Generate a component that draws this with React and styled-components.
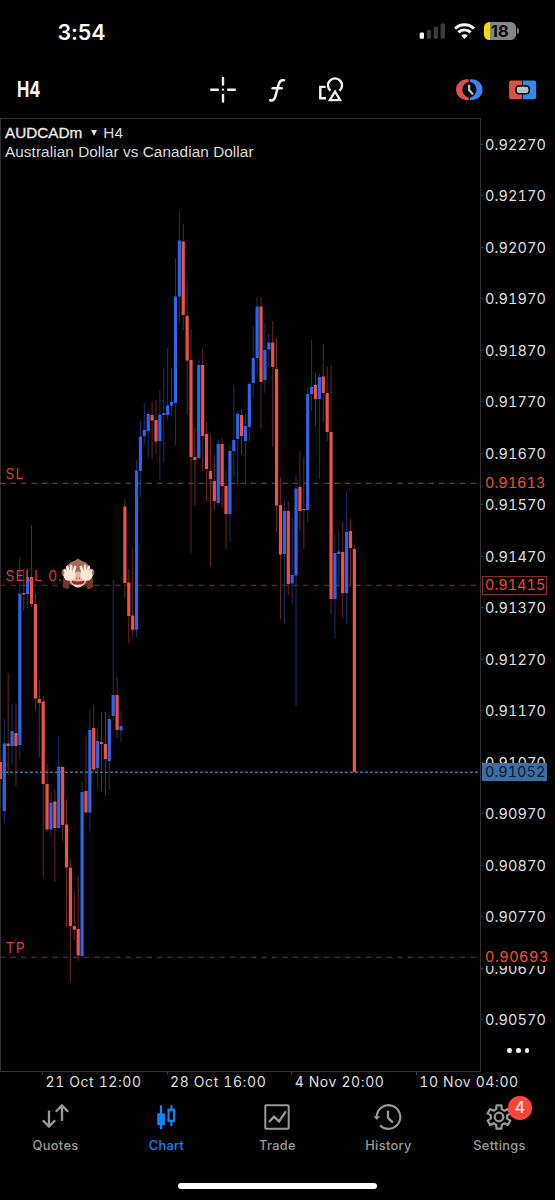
import React from 'react';
import styled, { createGlobalStyle } from 'styled-components';

const RED = '#ee5147';
const BLUE = '#2f64ea';

/**
 *  Data
 */
const STEP = 3.89;

// [direction, high, body top, body bottom, low]
const candles = [
  ['r', 757, 762, 779, 779], ['b', 719, 743.5, 811, 823], ['r', 673, 743.5, 746, 775],
  ['b', 704, 731, 746, 765], ['r', 703, 733, 746, 787], ['b', 557, 593.5, 745, 759],
  ['r', 569, 593, 594.5, 611], ['b', 568, 577, 594, 608], ['r', 525, 577, 604, 607],
  ['r', 594, 604, 698.5, 710], ['r', 680, 699, 703, 757], ['r', 696, 701.5, 784, 877],
  ['r', 764, 784, 829.5, 832], ['b', 792, 802.7, 829.5, 837], ['r', 789, 801.5, 828, 882],
  ['b', 736, 766.7, 828, 829], ['r', 766, 767, 825, 841], ['r', 799, 824.5, 867.5, 927],
  ['r', 859, 867.7, 926, 982], ['r', 892, 926, 929.7, 940], ['r', 876, 929, 955.5, 961],
  ['b', 782, 792, 956, 957], ['r', 736, 791, 812.5, 814], ['b', 709, 730, 812.5, 831],
  ['r', 705, 728, 769.5, 772], ['b', 728, 741, 768, 789], ['r', 712, 742, 744, 792],
  ['r', 712, 744, 759, 796], ['b', 715, 719, 761, 790], ['b', 580, 695, 716, 720],
  ['r', 677, 695, 730, 738], ['b', 711, 726, 730.5, 742], ['r', 499, 506.5, 583, 598],
  ['r', 569, 582.5, 616, 643], ['r', 548, 615.5, 629.7, 636], ['b', 460, 470.5, 629.7, 637],
  ['b', 421, 436.5, 471, 497], ['b', 403, 430, 436, 445], ['b', 412, 414, 431, 457],
  ['r', 402, 415, 420.5, 459], ['r', 400, 420, 441.5, 454], ['b', 390, 414.5, 441, 480],
  ['b', 368, 413, 415, 462], ['b', 348, 405.5, 415, 420], ['b', 368, 402, 405.5, 417],
  ['b', 258, 296.5, 403, 445], ['b', 212, 240.5, 296.5, 324], ['r', 224, 241.5, 315, 330],
  ['r', 281, 316, 360.5, 415], ['r', 329, 360, 457, 553], ['r', 427, 457, 460, 506],
  ['b', 360, 365, 458, 459], ['r', 349, 365, 436, 471], ['r', 422, 434, 469, 501],
  ['r', 435, 471, 479, 566], ['r', 455, 481, 501, 510], ['b', 440, 444, 503, 506],
  ['r', 438, 444, 486, 508], ['r', 471, 486, 514, 549], ['b', 445, 451, 514, 542],
  ['b', 385, 440, 451, 476], ['b', 411, 414, 439, 486], ['r', 409, 415, 436, 454],
  ['b', 414, 426, 441, 485], ['b', 382, 384, 427, 442], ['b', 326, 358, 383, 398],
  ['b', 297, 306.5, 358, 375], ['r', 297, 306.5, 382, 428], ['b', 323, 350, 380, 393],
  ['b', 334, 342.5, 349.5, 368], ['r', 321, 342.5, 367, 447], ['r', 338, 369, 505.5, 532],
  ['r', 477, 505, 554.5, 619], ['b', 501, 511, 554, 624], ['r', 502, 511, 584, 595],
  ['b', 518, 575, 583.5, 604], ['b', 475, 488.5, 575.5, 706], ['r', 451, 487, 511, 531],
  ['r', 457, 509, 510.2, 549], ['b', 387, 394, 510, 523], ['b', 340, 387, 394, 411],
  ['r', 373, 385, 399, 426], ['b', 374, 377, 399, 479], ['r', 344, 376.5, 393, 422],
  ['r', 366, 393, 432, 441], ['r', 365, 432, 599, 614], ['b', 535, 553, 599, 639],
  ['b', 532, 551.5, 554, 588], ['r', 522, 552, 593, 618], ['b', 492, 532, 593, 623],
  ['r', 519, 531, 548, 587], ['r', 545, 549, 772, 772],
];

const prices = [
  '0.92270', '0.92170', '0.92070', '0.91970', '0.91870', '0.91770',
  '0.91670', '0.91570', '0.91470', '0.91370', '0.91270', '0.91170',
  '0.91070', '0.90970', '0.90870', '0.90770', '0.90670', '0.90570',
];

const times = ['21 Oct 12:00', '28 Oct 16:00', '4 Nov 20:00', '10 Nov 04:00'];

/**
 *  Styled Components
 */
const GlobalStyle = createGlobalStyle`
  body {
    margin: 0;
    background: #000;
  }
`;

const Screen = styled.div`
  display: flex;
  flex-direction: column;
  width: 555px;
  height: 1200px;
  overflow: hidden;
  background: #000;
  color: #fff;
  font-family: Inter, "Liberation Sans", sans-serif;
`;

const StatusBar = styled.header`
  display: flex;
  align-items: center;
  justify-content: space-between;
  box-sizing: border-box;
  height: 62px;
  padding: 0 36px 0 57.5px;
`;

const Clock = styled.span`
  font-size: 21.5px;
  font-weight: 600;
  line-height: 62px;
  letter-spacing: -0.1px;
  padding-top: 1px;
`;

const StatusIcons = styled.div`
  display: flex;
  align-items: center;
  gap: 9px;
`;

const Battery = styled.div`
  display: flex;
  align-items: center;
  justify-content: center;
  width: 32.5px;
  height: 18px;
  border-radius: 5.5px;
  background: linear-gradient(90deg, #ffd60a 18%, #858585 18%);
  color: #0a0a0a;
  font-size: 16.5px;
  font-weight: 700;
  line-height: 18px;
`;

const BatteryTip = styled.i`
  width: 1.6px;
  height: 6px;
  margin-left: -7.6px;
  border-radius: 0 2px 2px 0;
  background: #777;
`;

const Toolbar = styled.nav`
  display: grid;
  grid-template-columns: 196px 54px 54px 54px 1fr 54px 53px 6px;
  align-items: center;
  justify-items: center;
  box-sizing: border-box;
  height: 56px;
  padding-bottom: 1px;
`;

const Timeframe = styled.button`
  justify-self: start;
  margin: 0 0 0 17px;
  padding: 0 0 1px;
  border: 0;
  background: none;
  color: #f4f4f4;
  font: 700 22px Inter, sans-serif;
  line-height: 54px;
  transform: scaleX(0.75);
  transform-origin: left;
`;

const ChartRow = styled.main`
  display: flex;
  height: 954px;
`;

const Plot = styled.section`
  position: relative;
  box-sizing: border-box;
  width: 481px;
  border: 1.5px solid #303030;
  border-left-width: 1px;
  font-family: "Liberation Sans", Arial, sans-serif;
`;

const Candles = styled.svg`
  position: absolute;
  left: -1px;
  top: -1px;
`;

const Heading = styled.div`
  position: relative;
  padding: 3.5px 0 0 4px;
  color: #dcdcdc;
  font-size: 15.3px;
  line-height: 19px;
`;

const Symbol = styled.strong`
  font-weight: 400;
  color: #eee;
  -webkit-text-stroke: 0.3px #eee;
`;

const Arrow = styled.i`
  display: inline-block;
  margin: 0 6.5px 2px 8.5px;
  border: 3px solid transparent;
  border-top: 6px solid #ddd;
  border-bottom: 0;
`;

const Description = styled.div`
  font-size: 15.3px;
  letter-spacing: 0.08px;
`;

const LevelLabel = styled.span`
  position: absolute;
  left: 4.5px;
  top: ${props => props.$y - 119 - 9}px;
  color: ${props => props.$color};
  font: 14px/18px Inter, sans-serif;
  letter-spacing: 1.1px;
`;

const PriceAxis = styled.aside`
  position: relative;
  width: 74px;
`;

const PriceList = styled.ol`
  margin: 0;
  padding: 0.7px 0 0;
  list-style: none;
`;

const Price = styled.li`
  display: flex;
  align-items: center;
  height: 51.5px;
  color: #dedede;
  font-size: 14.5px;
  font-variant-numeric: tabular-nums;
  letter-spacing: 0.08px;

  &:before {
    content: "";
    width: 2px;
    height: 1px;
    margin-right: 2px;
    background: #3a3a3a;
  }
`;

const PriceTag = styled.span`
  position: absolute;
  left: 1px;
  top: ${props => props.$y - 118 - 9.3}px;
  box-sizing: border-box;
  width: ${props => props.$width || 65.3}px;
  height: 18.6px;
  padding-left: 2px;
  border: 1px solid ${props => props.$border || 'transparent'};
  background: ${props => props.$fill || '#000'};
  color: ${props => props.$color};
  font-size: 14.5px;
  font-variant-numeric: tabular-nums;
  line-height: 16.6px;
  letter-spacing: ${props => props.$spacing || 0}px;
`;

const More = styled.button`
  display: flex;
  gap: 4.4px;
  margin: 2.5px 0 0 26.4px;
  padding: 0;
  border: 0;
  background: none;

  i {
    width: 4.4px;
    height: 4.4px;
    border-radius: 50%;
    background: #f5f5f5;
  }
`;

const TimeAxis = styled.div`
  display: grid;
  grid-template-columns: repeat(4, 124.6px);
  height: 23px;
  padding-left: 42px;
`;

const Time = styled.time`
  padding-left: 3.5px;
  color: #dedede;
  font-size: 14px;
  font-variant-numeric: tabular-nums;
  line-height: 19.5px;
  letter-spacing: 0.6px;
  white-space: nowrap;
  background: linear-gradient(#3a3a3a, #3a3a3a) 0 0 / 1px 3px no-repeat;
`;

const TabBar = styled.nav`
  display: grid;
  grid-template-columns: repeat(5, 1fr);
  height: 88px;
`;

const Tab = styled.a`
  position: relative;
  display: flex;
  flex-direction: column;
  align-items: center;
  padding-top: 7px;
  color: ${props => (props.$active ? '#0a84ff' : '#999')};
  font-size: 12.8px;
  font-weight: 500;
  line-height: 18px;
  letter-spacing: 0.35px;

  svg {
    margin: 0 1.6px 5px 0;
  }
`;

const Badge = styled.b`
  position: absolute;
  left: 64.2px;
  top: 1.4px;
  width: 23.4px;
  height: 23.4px;
  border-radius: 50%;
  background: #ff453a;
  color: #fff;
  font-size: 16px;
  font-weight: 400;
  line-height: 23.4px;
  letter-spacing: 0;
  text-align: center;
`;

const HomeIndicator = styled.div`
  width: 198.5px;
  height: 6px;
  margin: 0 auto;
  border-radius: 3px;
  background: #fff;
`;

/**
 *  Status bar icons
 */
const Signal = () => (
  <svg width="26" height="16" viewBox="0 0 26 16" fill="#3b3b3b">
    <rect x="0.7" y="9.5" width="4.3" height="6.3" rx="1.2" fill="#fff" />
    <rect x="7.8" y="7" width="4.3" height="8.8" rx="1.2" />
    <rect x="14.7" y="3.7" width="4.3" height="12.1" rx="1.2" />
    <rect x="21.6" y="0.4" width="4.3" height="15.4" rx="1.2" />
  </svg>
);

const Wifi = () => (
  <svg width="21" height="16" viewBox="0 0 21 16" fill="none" stroke="#fff" strokeWidth="2.9">
    <path d="M1 5.6A13.6 13.6 0 0 1 20 5.6" />
    <path d="M4.4 9.4A8.7 8.7 0 0 1 16.6 9.4" />
    <path d="M10.5 16L7.2 12.6A4.7 4.7 0 0 1 13.8 12.6Z" fill="#fff" stroke="none" />
  </svg>
);

/**
 *  Toolbar icons
 */
const Crosshair = () => (
  <svg width="28" height="28" viewBox="0 0 28 28" stroke="#f2f2f2" strokeWidth="2.4" strokeLinecap="round">
    <path d="M2.2 13.7H8.8M19.2 13.7H25.8M14 1.9V8.5M14 18.9V25.5" />
    <circle cx="14" cy="13.7" r="1.1" fill="#f2f2f2" stroke="none" />
  </svg>
);

const FunctionIcon = () => (
  <svg width="28" height="28" viewBox="0 0 28 28" fill="none" stroke="#f2f2f2" strokeWidth="2.5" strokeLinecap="round">
    <path d="M7.2 24.2C10 25 11.4 23.6 12.2 20.9L15.6 8.6C16.5 5.2 18 3.6 21 4.3" />
    <path d="M9.6 12.3H18.6" />
  </svg>
);

const Shapes = () => (
  <svg width="28" height="28" viewBox="0 0 28 28" fill="none" stroke="#f2f2f2" strokeWidth="2.4">
    <path d="M8.6 10.9H3.3V22.2H9" />
    <path d="M13.6 14.8A7 7 0 1 1 22.4 14.8" />
    <path d="M18 15.5L12.9 24.1H23.1Z" />
  </svg>
);

const Sessions = () => (
  <svg width="28" height="24" viewBox="0 0 28 24">
    <path d="M13.8 1.2H11.5A10.5 10.5 0 0 0 11.5 22.2H13.8V19.7A8.2 8.2 0 0 1 13.8 3.7Z" fill="#dc5148" />
    <path d="M15 1.2H17.1A10.5 10.5 0 0 1 17.1 22.2H15V19.7A8.2 8.2 0 0 0 15 3.7Z" fill="#3587ed" />
    <path d="M14.1 6.7V12.1L18 16.4" fill="none" stroke="#b4c4ca" strokeWidth="2.3" />
  </svg>
);

const OneClick = () => (
  <svg width="28" height="20" viewBox="0 0 28 20">
    <path d="M2.1 0.4H13V19.2H2.1A2 2 0 0 1 0.1 17.2V2.4A2 2 0 0 1 2.1 0.4Z" fill="#dc5148" />
    <path d="M14 0.4H25.1A2 2 0 0 1 27.1 2.4V17.2A2 2 0 0 1 25.1 19.2H14Z" fill="#3587ed" />
    <rect x="7" y="5.9" width="13.2" height="7.8" rx="3" fill="#b4c4ca" stroke="#000" strokeWidth="1.5" />
  </svg>
);

/**
 *  Tab icons
 */
const QuotesIcon = () => (
  <svg width="30" height="30" viewBox="0 0 30 30" fill="none" stroke="currentColor" strokeWidth="2.3">
    <path d="M9 8.5V24.5M2.8 18.3L9 24.5L15.2 18.3" />
    <path d="M22 19V3.5M15.8 9.7L22 3.5L28.2 9.7" />
  </svg>
);

const ChartIcon = () => (
  <svg width="30" height="30" viewBox="0 0 30 30" fill="none" stroke="currentColor" strokeWidth="2.2">
    <path d="M10 3.3V27" />
    <rect x="6.2" y="11.3" width="7.7" height="11.7" fill="currentColor" stroke="none" />
    <path d="M20.4 3.3V7.5M20.4 19.5V24" />
    <rect x="17.6" y="7.8" width="5.6" height="11" />
  </svg>
);

const TradeIcon = () => (
  <svg width="30" height="30" viewBox="0 0 30 30" fill="none" stroke="currentColor" strokeWidth="2">
    <rect x="3.3" y="3.3" width="23.4" height="23.4" rx="0.8" />
    <path d="M7 20L12 14.6L17 19.4L23.8 9.3" strokeWidth="2.3" />
  </svg>
);

const HistoryIcon = () => (
  <svg width="30" height="30" viewBox="0 0 30 30" fill="none" stroke="currentColor" strokeWidth="2.1">
    <path d="M3.7 15A11.8 11.8 0 1 1 7 23.2" />
    <path d="M0.6 14.2H7.2L3.8 18Z" fill="currentColor" stroke="none" />
    <path d="M15 8.8V15.9L20 20.6" strokeWidth="2.3" />
  </svg>
);

const gearPath = () => {
  const points = [];
  for (let i = 0; i < 6; i++) {
    [[-19, 8.3], [-12, 11.9], [12, 11.9], [19, 8.3]].forEach(([offset, r]) => {
      const a = ((i * 60 + offset - 90) * Math.PI) / 180;
      points.push(`${(15 + r * Math.cos(a)).toFixed(2)} ${(15 + r * Math.sin(a)).toFixed(2)}`);
    });
  }
  return `M${points.join('L')}Z`;
};

const SettingsIcon = () => (
  <svg width="30" height="30" viewBox="0 0 30 30" fill="none" stroke="currentColor" strokeWidth="2.2" strokeLinejoin="round">
    <path d={gearPath()} />
    <circle cx="15" cy="15" r="4.3" />
  </svg>
);

const Monkey = () => (
  <g>
    <circle cx="65.6" cy="572.5" r="3.9" fill="#a9665a" />
    <circle cx="90.4" cy="572.5" r="3.9" fill="#a9665a" />
    <path d="M65 574Q65 563 74 561L78 558.6L82 561Q91 563 91 574Q91 586 78 586Q65 586 65 574Z" fill="#a9675a" />
    <ellipse cx="78" cy="579" rx="8.5" ry="7.6" fill="#e3b5a0" />
    <path d="M71.5 580.4Q78 582.5 84.5 580.4Q83.5 586 78 586Q72.5 586 71.5 580.4Z" fill="#a81f24" />
    <path d="M72 583.6Q78 586 84 583.6Q82 587.6 78 587.6Q74 587.6 72 583.6Z" fill="#f0dad0" />
    <path d="M63.2 578L70 580L69 588.5Q65.5 589.5 62.8 587Z" fill="#723728" />
    <path d="M86.2 580L93 578L93.4 587Q90 589.8 87 588.8Z" fill="#723728" />
    {/* fingers are drawn as strokes that fan out from each palm */}
    <g stroke="#f6e6d6" strokeWidth="2.7" strokeLinecap="round">
      <path d="M68 575L64.8 570.6M69 574L67.2 567M71 573L71 565.8M73 574L75 567" />
      <path d="M88 575L91.2 570.6M87 574L88.8 567M85 573L85 565.8M83 574L81 567" />
    </g>
    <g fill="#f6e6d6">
      <ellipse cx="69.6" cy="575.6" rx="6.2" ry="5.2" />
      <ellipse cx="86.4" cy="575.6" rx="6.2" ry="5.2" />
    </g>
    <path d="M76.3 578.2H77.2M79 578.2H79.9" stroke="#6b3026" strokeWidth="1.2" />
  </g>
);

const PriceChart = () => (
  <Candles width="480" height="952" viewBox="0 118 480 952">
    <g stroke="#8a2a24" strokeWidth="1.1" strokeDasharray="5.6 4.85">
      <path d="M0 483.4H480" />
      <path d="M0 585.3H480" />
      <path d="M0 957.2H480" />
    </g>
    {candles.map(([dir, high, top, bottom, low], i) => {
      const x = 0.4 + i * STEP;
      const up = dir === 'b';
      return (
        <g key={i}>
          <path d={`M${x} ${high}V${low}`} stroke={up ? '#17346e' : '#6e2620'} strokeWidth="1" />
          <rect x={x - 1.6} y={top} width="3.2" height={bottom - top} fill={up ? BLUE : RED} />
        </g>
      );
    })}
    <path d="M0 772.2H480" stroke="#4379a3" strokeWidth="1.4" strokeDasharray="2.8 2.2" />
  </Candles>
);

const MonkeyLayer = () => (
  <Candles width="480" height="952" viewBox="0 118 480 952">
    <Monkey />
  </Candles>
);

const tabs = [
  { name: 'Quotes', Icon: QuotesIcon },
  { name: 'Chart', Icon: ChartIcon, active: true },
  { name: 'Trade', Icon: TradeIcon },
  { name: 'History', Icon: HistoryIcon },
  { name: 'Settings', Icon: SettingsIcon, badge: 4 },
];

const App = () => (
  <Screen>
    <GlobalStyle />
    <StatusBar>
      <Clock>3:54</Clock>
      <StatusIcons>
        <Signal />
        <Wifi />
        <Battery>18</Battery>
        <BatteryTip />
      </StatusIcons>
    </StatusBar>
    <Toolbar>
      <Timeframe>H4</Timeframe>
      <Crosshair />
      <FunctionIcon />
      <Shapes />
      <span />
      <Sessions />
      <OneClick />
    </Toolbar>
    <ChartRow>
      <Plot>
        <PriceChart />
        <Heading>
          <Symbol>AUDCADm</Symbol>
          <Arrow />
          H4
          <Description>Australian Dollar vs Canadian Dollar</Description>
        </Heading>
        <LevelLabel $y={474} $color="#cf4526">SL</LevelLabel>
        <LevelLabel $y={576} $color="#cf3c38">SELL 0.</LevelLabel>
        <LevelLabel $y={947.5} $color="#cf4526">TP</LevelLabel>
        <MonkeyLayer />
      </Plot>
      <PriceAxis>
        <PriceList>
          {prices.map(price => <Price key={price}>{price}</Price>)}
        </PriceList>
        <More><i /><i /><i /></More>
        <PriceTag $y={483.3} $color="#f4511e">0.91613</PriceTag>
        <PriceTag $y={585.3} $color="#e8453c" $border="#8c2a24">0.91415</PriceTag>
        <PriceTag $y={772} $color="#0a1c33" $fill="#3a6ea5" $border="#3a6ea5">0.91052</PriceTag>
        <PriceTag $y={957} $color="#f4511e" $width={68} $spacing={0.5}>0.90693</PriceTag>
      </PriceAxis>
    </ChartRow>
    <TimeAxis>
      {times.map(time => <Time key={time}>{time}</Time>)}
    </TimeAxis>
    <TabBar>
      {tabs.map(({ name, Icon, active, badge }) => (
        <Tab key={name} $active={active}>
          <Icon />
          {name}
          {badge && <Badge>{badge}</Badge>}
        </Tab>
      ))}
    </TabBar>
    <HomeIndicator />
  </Screen>
);

export default App;
